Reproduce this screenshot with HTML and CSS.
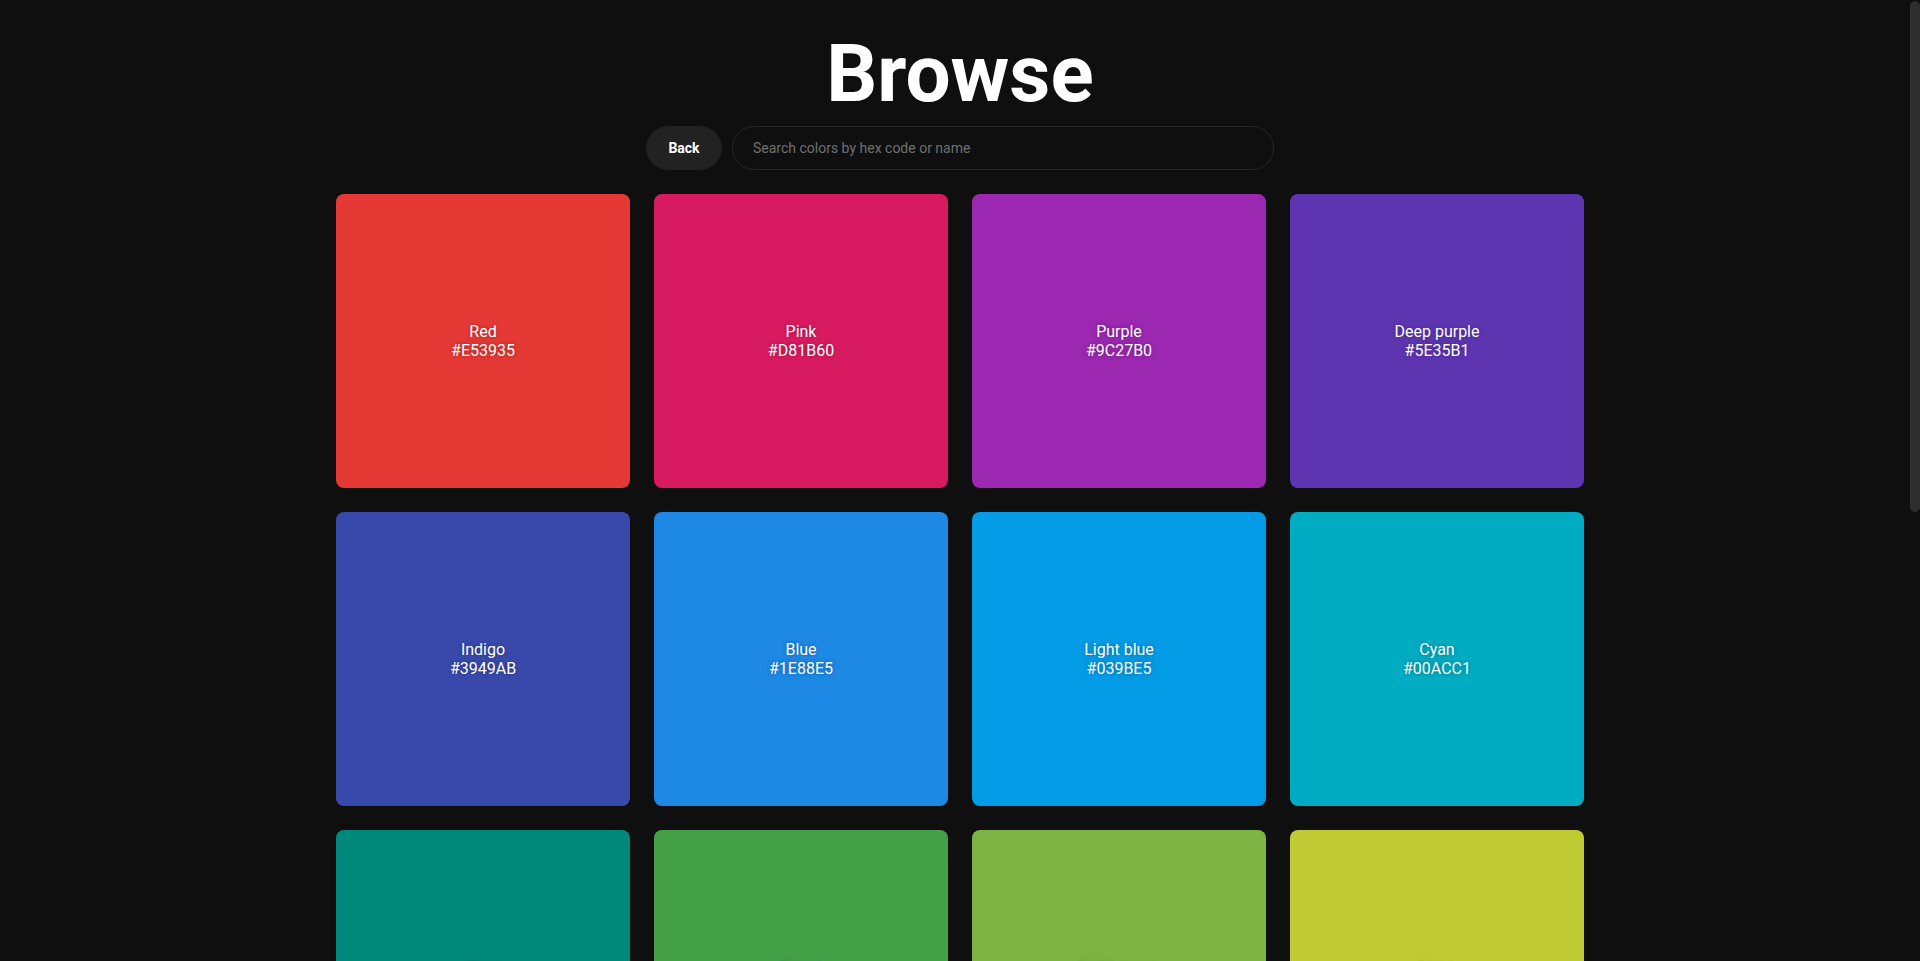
FILE: index.html
```html
<!DOCTYPE html>
<html lang="en">
<head>
<meta charset="utf-8">
<title>Browse</title>
<link rel="stylesheet" href="styles.css">
</head>
<body>
<main class="page">
  <h1 class="title">Browse</h1>
  <div class="toolbar">
    <button class="back">Back</button>
    <input class="search" type="text" placeholder="Search colors by hex code or name">
  </div>
  <div class="grid">
    <div class="swatch" style="background:#E53935"><span>Red</span><span>#E53935</span></div>
    <div class="swatch" style="background:#D81B60"><span>Pink</span><span>#D81B60</span></div>
    <div class="swatch" style="background:#9C27B0"><span>Purple</span><span>#9C27B0</span></div>
    <div class="swatch" style="background:#5E35B1"><span>Deep purple</span><span>#5E35B1</span></div>
    <div class="swatch" style="background:#3949AB"><span>Indigo</span><span>#3949AB</span></div>
    <div class="swatch" style="background:#1E88E5"><span>Blue</span><span>#1E88E5</span></div>
    <div class="swatch" style="background:#039BE5"><span>Light blue</span><span>#039BE5</span></div>
    <div class="swatch" style="background:#00ACC1"><span>Cyan</span><span>#00ACC1</span></div>
    <div class="swatch" style="background:#00897B"><span>Teal</span><span>#00897B</span></div>
    <div class="swatch" style="background:#43A047"><span>Green</span><span>#43A047</span></div>
    <div class="swatch" style="background:#7CB342"><span>Light green</span><span>#7CB342</span></div>
    <div class="swatch" style="background:#C0CA33"><span>Lime</span><span>#C0CA33</span></div>
    <div class="swatch" style="background:#FDD835"><span>Yellow</span><span>#FDD835</span></div>
    <div class="swatch" style="background:#FFB300"><span>Amber</span><span>#FFB300</span></div>
    <div class="swatch" style="background:#FB8C00"><span>Orange</span><span>#FB8C00</span></div>
    <div class="swatch" style="background:#F4511E"><span>Deep orange</span><span>#F4511E</span></div>
    <div class="swatch" style="background:#6D4C41"><span>Brown</span><span>#6D4C41</span></div>
    <div class="swatch" style="background:#757575"><span>Grey</span><span>#757575</span></div>
    <div class="swatch" style="background:#546E7A"><span>Blue grey</span><span>#546E7A</span></div>
  </div>
</main>
<div class="scroll-thumb" aria-hidden="true"></div>
</body>
</html>
```

FILE: styles.css
```css
html {
  background: #0f0f0f;
}
body {
  margin: 0;
  background: #0f0f0f;
  color: #fff;
  font-family: Roboto, "Liberation Sans", Arial, sans-serif;
}
.page {
  display: flex;
  flex-direction: column;
  align-items: center;
  padding: 27px 0 40px;
}
.title {
  margin: 0 0 5px;
  font-size: 80px;
  font-weight: 700;
  line-height: normal;
}
.toolbar {
  display: flex;
  gap: 10px;
}
.back {
  height: 44px;
  width: 76px;
  border: none;
  border-radius: 22px;
  background: #222222;
  color: #fff;
  font-family: inherit;
  font-size: 14px;
  font-weight: 700;
  cursor: pointer;
}
.search {
  box-sizing: border-box;
  width: 542px;
  height: 44px;
  padding: 0 20px;
  border: 1px solid #262626;
  border-radius: 22px;
  background: #0f0f0f;
  color: #fff;
  font-family: inherit;
  font-size: 14px;
  outline: none;
}
.search::placeholder {
  color: #6f6f6f;
}
.grid {
  margin-top: 24px;
  width: 1248px;
  display: grid;
  grid-template-columns: repeat(4, 1fr);
  gap: 24px;
}
.swatch {
  aspect-ratio: 1 / 1;
  border-radius: 8px;
  display: flex;
  flex-direction: column;
  align-items: center;
  justify-content: center;
  font-size: 16px;
  line-height: 19px;
  color: #fff;
  text-shadow: 0 0 4px rgba(0, 0, 0, 0.35);
}
.scroll-thumb {
  position: fixed;
  top: 1px;
  right: 0;
  width: 10px;
  height: 511px;
  border-radius: 5px;
  background: #2e2e2e;
}
```
